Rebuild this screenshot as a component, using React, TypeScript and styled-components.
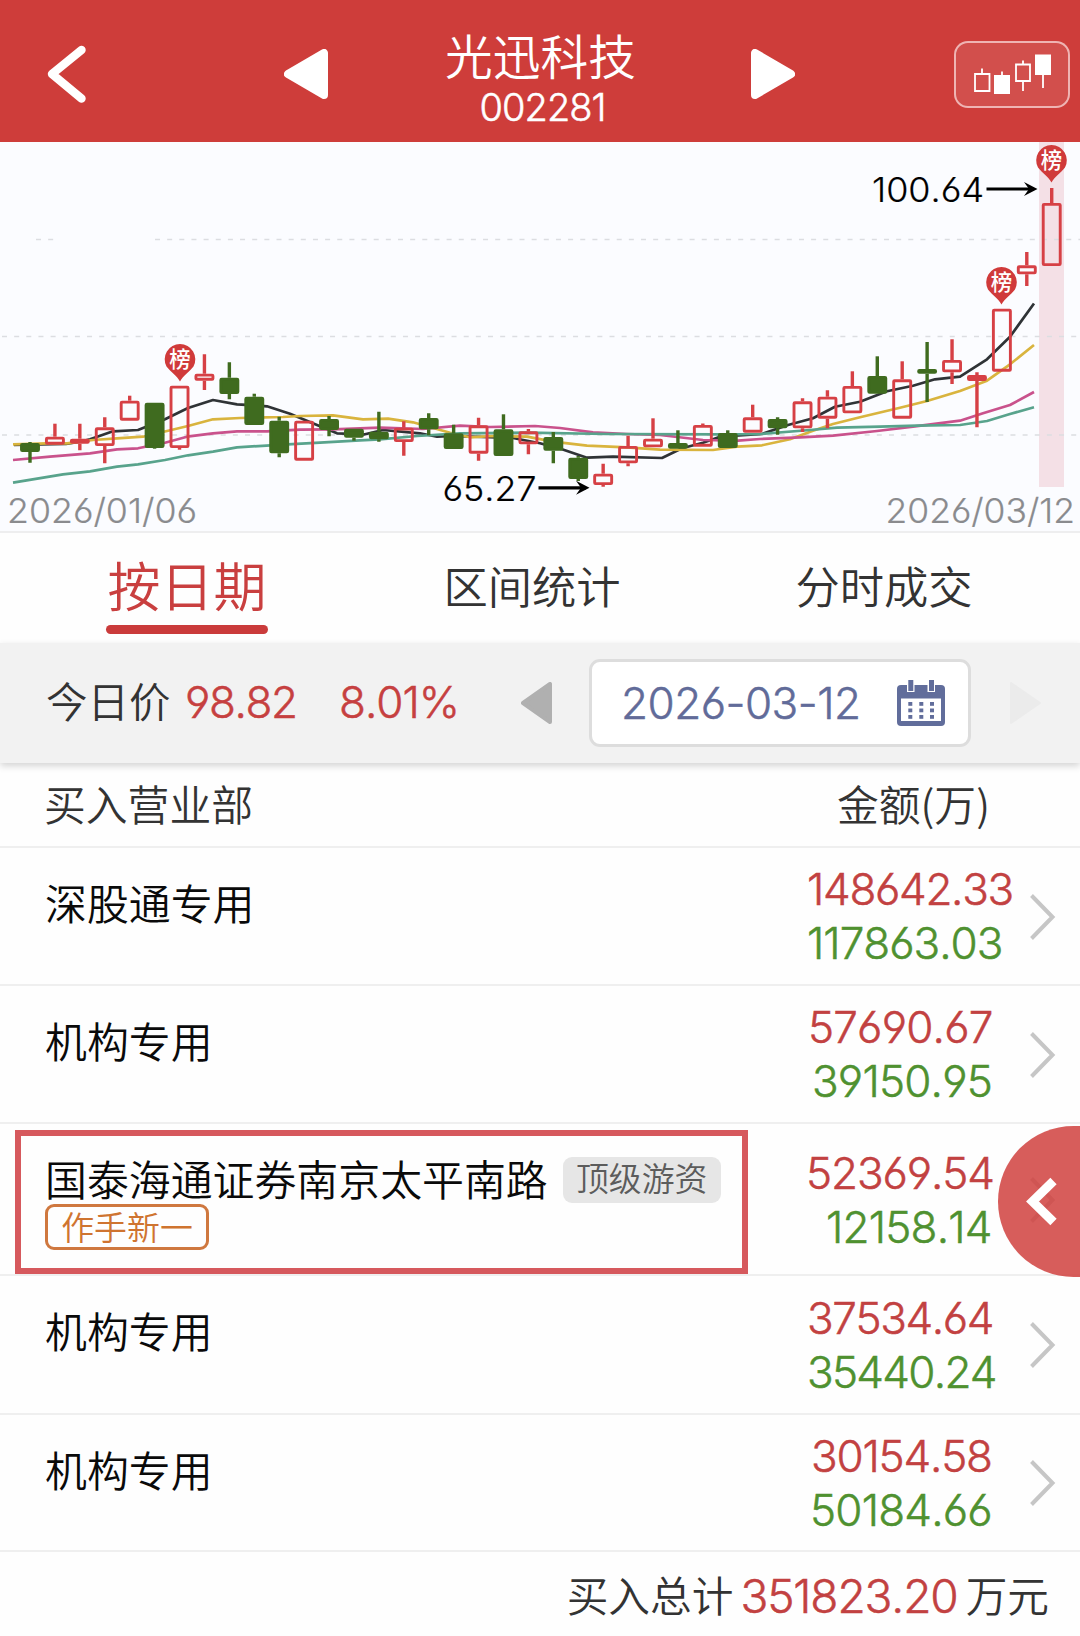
import React from 'react';
import styled, { createGlobalStyle } from 'styled-components';

const CJK = '"Noto Sans CJK SC", sans-serif';
const LATIN = 'Inter, Roboto, sans-serif';

const GlobalStyle = createGlobalStyle`
  body { margin: 0; background: #fff; }
  *, *::before, *::after { box-sizing: border-box; }
`;

const Page = styled.main`
  position: relative;
  width: 1080px;
  height: 1636px;
  overflow: hidden;
  display: flex;
  flex-direction: column;
  background: #fefefe;
  color: #333;
  font-family: ${CJK};
  font-weight: 350;
`;

const Num = styled.span<{ $size?: number; $track?: number; $color?: string }>`
  font-family: ${LATIN};
  font-feature-settings: 'cv03', 'cv04';
  font-kerning: none;
  font-weight: 300;
  -webkit-text-stroke: 0.5px currentColor;
  font-size: ${p => p.$size ?? 44}px;
  letter-spacing: ${p => p.$track ?? -1}px;
  color: ${p => p.$color ?? 'inherit'};
  white-space: nowrap;
`;

/* ---------- header ---------- */

const Header = styled.header`
  display: grid;
  grid-template-columns: 284px 44px 1fr 44px 285px;
  align-items: center;
  height: 142px;
  padding-top: 6px;
  background: #ce3d3a;
  color: #fff;
`;

const BackButton = styled.div`
  padding-left: 45px;
  display: flex;
`;

const TitleBlock = styled.div`
  display: flex;
  flex-direction: column;
  align-items: center;
  padding-top: 7px;
`;

const Title = styled.h1`
  margin: 0 0 0 2px;
  font-size: 47.7px;
  line-height: 60px;
  font-weight: inherit;
`;

const Code = styled(Num)`
  line-height: 44px;
  margin-left: 6px;
`;

const KlineButton = styled.div`
  justify-self: end;
  margin: 1px 10px 0 0;
  width: 116px;
  height: 67px;
  border: 2px solid rgba(255, 235, 235, 0.65);
  border-radius: 14px;
  background: #d24f4c;
  display: flex;
`;

const Arrow = ({ dir, color, w, h, r = 3 }: { dir: 'left' | 'right'; color: string; w: number; h: number; r?: number }) => {
  const d =
    dir === 'left'
      ? `M${w - r} ${r} L${w - r} ${h - r} L${r} ${h / 2} Z`
      : `M${r} ${r} L${r} ${h - r} L${w - r} ${h / 2} Z`;
  return (
    <svg width={w} height={h} viewBox={`0 0 ${w} ${h}`} display="block">
      <path d={d} fill={color} stroke={color} strokeWidth={r * 2} strokeLinejoin="round" />
    </svg>
  );
};

/* ---------- chart ---------- */

const ChartPanel = styled.section`
  height: 391px;
  background: #fbfcff;
  border-bottom: 2px solid #eeeeef;
`;

type Candle = [high: number, top: number, bottom: number, low: number, kind: 'r' | 'g' | 'R'];

const CANDLES: Candle[] = [
  [442, 443, 452, 462.7, 'g'], [423.7, 436.7, 444.7, 444, 'r'], [423.7, 438.7, 443.7, 450.3, 'R'],
  [417.3, 427.3, 446, 463.3, 'r'], [395.7, 400.7, 420.7, 420, 'r'], [403, 402.7, 448, 448.7, 'g'],
  [386, 385.7, 448, 449.7, 'r'], [354.3, 373.7, 380.7, 390, 'r'], [362.3, 377.7, 394, 399.3, 'g'],
  [393.7, 396.7, 425, 425, 'g'], [416.7, 420.7, 453.3, 457.3, 'g'], [421, 420.7, 460.7, 460, 'r'],
  [416, 419, 430, 436.3, 'g'], [429, 428.9, 437.7, 440.7, 'g'], [411.7, 431.7, 439.3, 441.7, 'g'],
  [421.3, 427.7, 442, 455.7, 'r'], [413.3, 418, 429.3, 435.3, 'g'], [424.7, 433.3, 449, 449, 'g'],
  [417.7, 425.3, 453.7, 460.7, 'r'], [414.3, 429.3, 456, 456, 'g'], [429, 431.3, 444.3, 454.3, 'r'],
  [432, 437, 450.7, 463.3, 'g'], [456, 457.7, 479, 481, 'g'], [463.7, 473.7, 485, 486.7, 'r'],
  [435.7, 446, 463.3, 466.3, 'r'], [418.3, 438.7, 447.3, 447, 'r'], [430.3, 443, 448.7, 448, 'g'],
  [423.5, 425, 446.7, 446, 'r'], [430.3, 433, 448, 448, 'g'], [404.7, 417.3, 432.7, 432, 'r'],
  [417.3, 419, 428.3, 434.7, 'g'], [398.3, 401.3, 428.3, 432, 'r'], [390.3, 396.7, 418.7, 428.3, 'r'],
  [371.3, 386, 413.3, 413, 'r'], [356.3, 376, 393.7, 393, 'g'], [361.3, 379.3, 418.7, 418, 'r'],
  [342, 369, 373.7, 402, 'g'], [339.3, 360, 372.3, 384, 'r'], [372.3, 375, 381, 427.3, 'R'],
  [309, 308.7, 371.7, 371, 'r'], [252, 265.3, 274.3, 286, 'r'], [188, 203, 266, 265, 'r'],
];

const LINES = [
  {
    color: '#2f3336',
    points: '14,445 66,444 80,441.7 90,439.3 113,431.3 138,430 165,419.3 188,408 213,400 237,404.3 255,405.3 267,406.3 290,413.7 320,426.3 337,433.3 354,434 365,434.3 383,430 420,433.3 437,436.7 453,436 513,438 540,443.3 562,449.3 587,457.7 613,456.7 662,458 682,448.3 703,442.7 720,436.7 762,434 788,425 813,418.3 835,406.7 860,401.7 887,391.3 913,385.7 935,379.3 960,376.7 987,359.3 1010,336.7 1034,303.5',
  },
  {
    color: '#d9b43e',
    points: '13,444.3 47,443.3 67,443.3 93,440 117,438.3 143,436.7 167,431 188,426 213,419.3 240,418 283,417 300,416 333,415.3 363,419.3 388,418.7 413,422.3 450,432.7 470,437.3 493,436 527,436.7 553,441.7 587,445.7 627,447.3 660,449.7 713,450 737,446.7 762,445.3 790,439.3 813,430.7 833,424 860,417.3 900,407.7 927,401 960,391 987,380.7 1010,364.3 1034,345',
  },
  {
    color: '#c9528c',
    points: '13,460 50,456.7 90,453.3 117,449.3 138,448.3 165,442.7 187,436.7 213,433.3 237,431.3 267,431.3 300,429.7 333,429.3 380,427.7 423,429 460,425.7 490,427 535,426 560,428 593,432.3 627,434 660,435 703,440 738,440.7 760,439 800,437.3 833,435.7 877,431 913,426.7 960,420.7 983,413.3 1010,405 1034,392',
  },
  {
    color: '#58a38c',
    points: '13,482.7 63,474.3 90,471.3 117,466.7 138,464.3 165,460 188,455.3 213,451.7 237,447.3 283,444.7 320,442.7 360,440.3 380,439.3 417,436 460,433.3 527,432.7 607,434 720,434.3 760,434 810,430 837,427.7 880,426.7 917,425.7 960,425 987,421 1010,414 1034,407.3',
  },
];

const Pin = ({ x, y }: { x: number; y: number }) => (
  <g transform={`translate(${x} ${y})`}>
    <path d="M-13.5 7.5 A15.3 15.3 0 1 1 13.5 7.5 C9 13 3 17 0 22.5 C-3 17 -9 13 -13.5 7.5Z" fill="#d03a3a" />
    <text x="0" y="7.9" textAnchor="middle" fontSize="21.5" fontWeight="500" fill="#fff" fontFamily={CJK}>榜</text>
  </g>
);

const ChartText = styled.text`
  font-family: ${LATIN};
  font-feature-settings: 'cv03', 'cv04';
  font-kerning: none;
  font-weight: 300;
  font-size: 34.5px;
  stroke-width: 0.2px;
`;

const Chart = () => (
  <ChartPanel>
    <svg width="1080" height="389" viewBox="0 142 1080 389" display="block">
      <rect x="1039" y="142" width="25" height="345" fill="#f4e0e6" />
      <g stroke="#dcdde1" strokeWidth="1.5" strokeDasharray="5 7.15">
        <path d="M36 239.5H54 M155 239.5H1080 M2 336.5H1080 M2 435H1080" />
      </g>
      {LINES.map(l => (
        <polyline key={l.color} points={l.points} fill="none" stroke={l.color} strokeWidth="2.7" strokeLinejoin="round" />
      ))}
      {CANDLES.map(([hi, top, bottom, lo, kind], i) => {
        const x = 30 + i * 24.92;
        const color = kind === 'g' ? '#3f6b1f' : '#d64045';
        const hollow = kind === 'r';
        return (
          <g key={i} stroke={color}>
            <path d={`M${x} ${hi}V${Math.max(top, hi)} M${x} ${bottom}V${Math.max(lo, bottom)}`} strokeWidth="3.4" />
            <rect
              x={x - 8.5}
              y={top + 1.4}
              width="17"
              height={Math.max(bottom - top - 2.8, 1)}
              rx="0.8"
              fill={hollow ? 'none' : color}
              strokeWidth="2.9"
            />
          </g>
        );
      })}
      <Pin x={180} y={359} />
      <Pin x={1001.5} y={282} />
      <Pin x={1051.5} y={160} />
      <g stroke="#000" strokeWidth="3.2" fill="none">
        <path d="M986.5 189H1034" />
        <path d="M538.5 487.8H586" />
      </g>
      <path d="M1037.5 189L1024 182L1029 189L1024 196Z M589.5 487.8L576 480.8L581 487.8L576 494.8Z" fill="#000" />
      <ChartText x="872" y="202" textLength="112" lengthAdjust="spacingAndGlyphs" stroke="#000">100.64</ChartText>
      <ChartText x="442.5" y="501" textLength="94" lengthAdjust="spacingAndGlyphs" stroke="#000">65.27</ChartText>
      <ChartText x="7" y="523" textLength="190" lengthAdjust="spacingAndGlyphs" fill="#8a8b8e" stroke="#8a8b8e">2026/01/06</ChartText>
      <ChartText x="885.5" y="523" textLength="189.5" lengthAdjust="spacingAndGlyphs" fill="#8a8b8e" stroke="#8a8b8e">2026/03/12</ChartText>
    </svg>
  </ChartPanel>
);

/* ---------- tabs ---------- */

const Tabs = styled.nav`
  display: flex;
  justify-content: space-between;
  height: 110px;
  padding: 0 108px 0 106px;
`;

const Tab = styled.div<{ $active?: boolean }>`
  display: flex;
  flex-direction: column;
  align-items: center;
  justify-content: space-between;
  width: ${p => (p.$active ? 162 : 176)}px;
  padding: 18px 0 9px;
  font-size: ${p => (p.$active ? 53 : 44.3)}px;
  line-height: ${p => (p.$active ? 66 : 68)}px;
  color: ${p => (p.$active ? '#c93f3f' : '#333')};
  white-space: nowrap;
`;

const TabBar = styled.span`
  width: 162px;
  height: 9px;
  border-radius: 5px;
  background: #ca3b3b;
`;

/* ---------- price bar ---------- */

const PriceBar = styled.section`
  display: flex;
  align-items: center;
  height: 120px;
  padding: 0 39px 0 46px;
  background: #f2f2f2;
  box-shadow: 0 3px 7px rgba(0, 0, 0, 0.17);
  line-height: 60px;
`;

const PriceLabel = styled.span`
  width: 139px;
  font-size: 41.5px;
  padding-bottom: 5px;
`;

const Price = styled(Num)`
  width: 154px;
  padding-bottom: 2px;
`;

const Percent = styled(Num)`
  width: 182px;
  padding-bottom: 2px;
`;

const DateBox = styled.div`
  display: flex;
  align-items: center;
  justify-content: space-between;
  width: 382px;
  height: 88px;
  margin: 0 39px 0 37px;
  padding: 0 23px 0 29px;
  background: #fff;
  border: 3px solid #dddddd;
  border-radius: 11px;
`;

const Calendar = () => (
  <svg width="48" height="46" viewBox="0 0 48 46">
    <rect x="0" y="5" width="48" height="41" rx="4" fill="#616d9b" />
    <rect x="4" y="18.5" width="40" height="22.5" fill="#fff" />
    <path d="M10 0h7.5v12h-7.5z M30.5 0h7.5v12h-7.5z" fill="#fff" />
    <path d="M11.3 0h5v11h-5z M32 0h5v11h-5z" fill="#616d9b" />
    {[22, 28.5, 35].map(y =>
      [11.3, 22.3, 33].map(x => <rect key={`${x}-${y}`} x={x} y={y} width="4" height="3.8" fill="#616d9b" />),
    )}
  </svg>
);

/* ---------- table ---------- */

const TableHead = styled.div`
  display: flex;
  justify-content: space-between;
  height: 85px;
  padding: 15px 90px 0 44px;
  border-bottom: 2px solid #efefef;
  font-size: 41.8px;
  line-height: 50px;
`;

const Row = styled.div<{ $height: number }>`
  position: relative;
  display: flex;
  align-items: center;
  height: ${p => p.$height}px;
  padding-left: 45px;
  border-bottom: 2px solid #efefef;
`;

const Broker = styled.div`
  align-self: flex-start;
  flex: 1;
  padding-top: 29px;
  color: #0a0a0a;
  font-size: 41.9px;
  line-height: 50px;
`;

const BrokerLine = styled.div`
  display: flex;
  align-items: center;
  height: 50px;
  gap: 15px;
  white-space: nowrap;
`;

const GreyTag = styled.span`
  display: inline-flex;
  justify-content: center;
  width: 158px;
  height: 46px;
  margin-top: 5px;
  border-radius: 9px;
  background: #e6e6e6;
  color: #5c5c5c;
  font-size: 32.9px;
  line-height: 40px;
`;

const OrangeTag = styled.div`
  display: flex;
  justify-content: center;
  width: 164px;
  height: 46px;
  margin-top: 1px;
  border: 3px solid #cf783f;
  border-radius: 9px;
  color: #cf7430;
  font-size: 32.9px;
  line-height: 37px;
`;

const HighlightFrame = styled.div`
  position: absolute;
  left: 15px;
  top: 6px;
  width: 733px;
  height: 144px;
  border: 6px solid #d6595d;
`;

const Amounts = styled.div`
  display: flex;
  flex-direction: column;
  align-items: flex-start;
  width: 224px;
  padding-top: 1px;
  line-height: 54px;
`;

const Amount = styled(Num)<{ $indent: number }>`
  margin-left: ${p => p.$indent}px;
`;

const Chevron = () => (
  <svg width="50" height="48" viewBox="0 0 50 48">
    <path d="M1.500 3.500L22.500 25L1.500 46.500" fill="none" stroke="#c6c6c6" strokeWidth="4" />
  </svg>
);

const TotalRow = styled.div`
  display: flex;
  align-items: center;
  justify-content: flex-end;
  height: 84px;
  padding-right: 31px;
  font-size: 41.7px;
  line-height: 60px;
`;

const Total = styled(Num)`
  margin: 3px 8px 0 7px;
`;

const DrawerHandle = styled.div`
  position: absolute;
  right: 0;
  top: 1126px;
  width: 82px;
  height: 151px;
  border-radius: 76px 0 0 76px;
  background: rgba(208, 66, 64, 0.86);
`;

const RED = '#c24141';
const GREEN = '#4f9130';

type Figure = { text: string; indent: number; track: number };

type RowData = {
  name: string;
  height: number;
  buy: Figure;
  sell: Figure;
  featured?: boolean;
};

const ROWS: RowData[] = [
  {
    name: '深股通专用',
    height: 138,
    buy: { text: '148642.33', indent: 1, track: -1.3 },
    sell: { text: '117863.03', indent: 1, track: -1 },
  },
  {
    name: '机构专用',
    height: 138.5,
    buy: { text: '57690.67', indent: 2, track: -0.8 },
    sell: { text: '39150.95', indent: 6, track: -0.8 },
  },
  {
    name: '国泰海通证券南京太平南路',
    height: 152.5,
    buy: { text: '52369.54', indent: 0, track: -1.1 },
    sell: { text: '12158.14', indent: 20, track: -0.8 },
    featured: true,
  },
  {
    name: '机构专用',
    height: 138.5,
    buy: { text: '37534.64', indent: 1, track: -1.4 },
    sell: { text: '35440.24', indent: 1, track: -1.7 },
  },
  {
    name: '机构专用',
    height: 137.5,
    buy: { text: '30154.58', indent: 5, track: -1.2 },
    sell: { text: '50184.66', indent: 4, track: -0.8 },
  },
];

export default function App() {
  return (
    <Page>
      <GlobalStyle />
      <Header>
        <BackButton>
          <svg width="42" height="60" viewBox="0 0 42 60">
            <path d="M36.5 6L7 30L36.5 54.5" fill="none" stroke="#fff" strokeWidth="8.400" strokeLinecap="round" strokeLinejoin="round" />
          </svg>
        </BackButton>
        <Arrow dir="left" color="#fff" w={44} h={50} r={4} />
        <TitleBlock>
          <Title>光迅科技</Title>
          <Code $size={38} $track={-1}>002281</Code>
        </TitleBlock>
        <Arrow dir="right" color="#fff" w={44} h={50} r={4} />
        <KlineButton>
          <svg width="112" height="63" viewBox="956 43 112 63">
            <g fill="none" stroke="#fff" strokeWidth="1.800">
              <path d="M975 74H989.500V91H975Z M982 68.500V74.500" />
              <path d="M1016 64.500H1030V81H1016Z M1023 60.500V64.500 M1023 81V91" />
              <path d="M1002 71.500V76 M1043 74V88" />
            </g>
            <path d="M994 75H1010V94H994Z M1035 54.500H1051V75H1035Z" fill="#fff" />
          </svg>
        </KlineButton>
      </Header>

      <Chart />

      <Tabs>
        <Tab $active>
          按日期
          <TabBar />
        </Tab>
        <Tab>区间统计</Tab>
        <Tab>分时成交</Tab>
      </Tabs>

      <PriceBar>
        <PriceLabel>今日价</PriceLabel>
        <Price $color="#c64040" $track={-1.4}>98.82</Price>
        <Percent $color="#c64040">8.01%</Percent>
        <Arrow dir="left" color="#b0b0b0" w={31} h={42} r={2} />
        <DateBox>
          <Num $color="#616b99" $track={-0.5}>2026-03-12</Num>
          <Calendar />
        </DateBox>
        <Arrow dir="right" color="#ebebeb" w={31} h={42} r={1} />
      </PriceBar>

      <TableHead>
        <span>买入营业部</span>
        <span>金额(万)</span>
      </TableHead>

      {ROWS.map((r, i) => (
        <Row key={i} $height={r.height}>
          <Broker>
            <BrokerLine>
              {r.name}
              {r.featured && <GreyTag>顶级游资</GreyTag>}
            </BrokerLine>
            {r.featured && <OrangeTag>作手新一</OrangeTag>}
          </Broker>
          <Amounts>
            <Amount $color={RED} $indent={r.buy.indent} $track={r.buy.track}>{r.buy.text}</Amount>
            <Amount $color={GREEN} $indent={r.sell.indent} $track={r.sell.track}>{r.sell.text}</Amount>
          </Amounts>
          <Chevron />
          {r.featured && <HighlightFrame />}
        </Row>
      ))}

      <TotalRow>
        买入总计
        <Total $size={46} $color={RED} $track={-1.1}>351823.20</Total>
        万元
      </TotalRow>

      <DrawerHandle>
        <svg width="82" height="151" viewBox="0 0 82 151">
          <path d="M55.5 55L34.5 75.5L55.5 96" fill="none" stroke="#fff" strokeWidth="9" />
        </svg>
      </DrawerHandle>
    </Page>
  );
}
